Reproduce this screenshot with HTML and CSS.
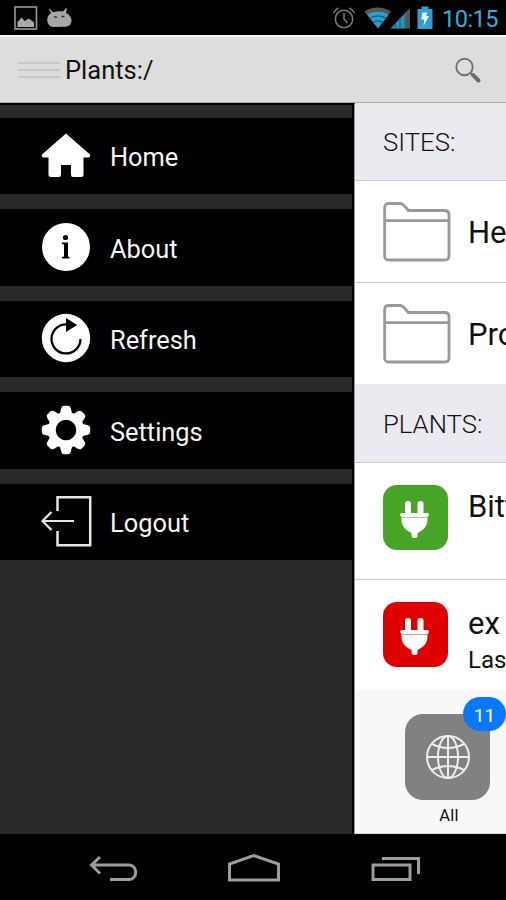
FILE: index.html
```html
<!DOCTYPE html>
<html lang="en">
<head>
<meta charset="utf-8">
<title>Plants</title>
<link rel="stylesheet" href="styles.css">
</head>
<body>
<div class="screen">
  <div class="status">
    <svg class="status-left" width="80" height="36" viewBox="0 0 80 36">
      <rect x="15" y="7" width="21.5" height="22" fill="#050505" stroke="#999" stroke-width="1.6"/>
      <path d="M17.500 27v-5l2-2 2-2.500 3 3.500 2-1 2-1.500 3 2 2.500 2v4.500z" fill="#aaa"/>
      <path d="M47.200 19c.5-3 2-5 4-6l-2.500-4 1-.4 3.200 3.700c3-1 6-1.200 10-.8L66 8l1 .5-1.200 4.300c3 1.500 5.200 3.800 5.700 6.700.4 4-2 7-6 7.300l-12 .2c-4-.5-6.500-3.500-6.300-8z" fill="#a6a6a6"/>
      <path d="M54 17h3M61.500 16.500h3" stroke="#333" stroke-width="1.400"/>
    </svg>
    <div class="status-right">
      <svg width="112" height="36" viewBox="330 0 112 36">
        <g fill="none" stroke="#777" stroke-width="1.600"><circle cx="344" cy="19" r="8.700"/><path d="M344 13v6l3.500 4M333.500 13c1-2 2.500-4 5-5M354.500 13c-1-2-2.500-4-5-5"/></g>
        <path d="M364.500 11.500c7-5.300 19-5.300 26.500 0l-2.200 3c-6-4.500-16-4.500-22 0z" fill="#5c5652"/>
        <path d="M366.800 14.500c6-4.500 16-4.500 22 0L378 28.500z" fill="#2f9dcc"/>
        <path d="M369.500 18.500c5-3.500 12-3.500 17 0M373 22.500c3-2 7-2 10 0" fill="none" stroke="#155c7c" stroke-width="1.200"/>
        <path d="M390.500 28.500L406 12v16.500z" fill="#2d91ba"/><path d="M406 12l4-4v20.500h-4z" fill="#5b524e"/>
        <path d="M395.500 23v6M400 18v11M405 13v16" stroke="#17617f"/>
        <path d="M417.500 9h4V6.500h7V9h4v20h-15z" fill="#2e9fce"/>
        <path d="M422.500 12.500h4.500l-.8 3.700 2.800-.2-5.500 10 .8-6.500h-3z" fill="#eefaff"/>
      </svg>
      <span class="clock">10:15</span>
    </div>
  </div>

  <header class="bar">
    <div class="burger"><i></i><i></i><i></i></div>
    <h1 class="title">Plants:/</h1>
    <svg class="search" width="30" height="30" viewBox="452 54 30 30">
      <circle cx="464.500" cy="66" r="8.200" fill="none" stroke="#737373" stroke-width="1.900"/>
      <path d="M470.300 71.800l3 3" stroke="#737373" stroke-width="2"/><path d="M473 74l5.500 5.500" stroke="#6c6c6c" stroke-width="4" stroke-linecap="round"/>
    </svg>
  </header>

  <main class="body">
    <nav class="drawer">
      <a class="item"><svg class="icon" viewBox="0 0 52 52"><path d="M26 3.500L50 24.500q1 3-2 3h-4.500v17q0 2.500-2.500 2.500h-8q-2 0-2-2.500V35H21v9.500q0 2.500-2 2.500h-8q-2.500 0-2.500-2.500v-17H4q-3 0-2-3z" fill="#fff"/></svg><span>Home</span></a>
      <a class="item"><svg class="icon up" viewBox="0 0 52 52"><circle cx="26" cy="26" r="24" fill="#fff"/><circle cx="25.500" cy="16.500" r="2.600"/><path d="M22 21.500h6v14l1.500.5v1.500H22V36l2-.5V23.500l-2-.5z"/></svg><span>About</span></a>
      <a class="item"><svg class="icon up" viewBox="0 0 52 52"><circle cx="26" cy="26" r="24.200" fill="#fff"/><path d="M40.500 27A14.500 14.500 0 1 1 27 12.500" fill="none" stroke="#000" stroke-width="2.300"/><path d="M26 6l11 7-11 7z"/></svg><span>Refresh</span></a>
      <a class="item"><svg class="icon" viewBox="0 0 52 52">
        <g fill="#fff"><path fill-rule="evenodd" d="M26 8a18 18 0 1 0 0 36 18 18 0 0 0 0-36zm0 7.700a10.300 10.300 0 1 1 0 20.600 10.300 10.300 0 0 1 0-20.600z"/>
        <path id="tooth" d="M19.500 11l1.800-7q.6-2.200 2.700-2.200h4q2.100 0 2.700 2.200l1.800 7z"/>
        <use href="#tooth" transform="rotate(45 26 26)"/><use href="#tooth" transform="rotate(90 26 26)"/><use href="#tooth" transform="rotate(135 26 26)"/><use href="#tooth" transform="rotate(180 26 26)"/><use href="#tooth" transform="rotate(225 26 26)"/><use href="#tooth" transform="rotate(270 26 26)"/><use href="#tooth" transform="rotate(315 26 26)"/></g></svg><span>Settings</span></a>
      <a class="item"><svg class="icon up" viewBox="0 0 52 52"><path d="M17.500 16V2.300h32.700v48H17.500V36" fill="none" stroke="#e8e4e4" stroke-width="2.500"/><path d="M34 26H3M11.500 17L2.500 26l9 9" fill="none" stroke="#e8e4e4" stroke-width="2.200"/></svg><span>Logout</span></a>
    </nav>

    <section class="content">
      <h2 class="group">SITES:</h2>
      <div class="site"><svg class="folder" viewBox="0 0 68 60"><path d="M1.700 5.500q0-4 4-4H17q2 0 3.500 1.500l5 5.500H61q5 0 5 4V54q0 4-4 4H5.700q-4 0-4-4zM2 18.700h64" fill="none" stroke="#979a9a" stroke-width="2.800"/></svg><span>He</span></div>
      <div class="site last"><svg class="folder" viewBox="0 0 68 60"><path d="M1.700 5.500q0-4 4-4H17q2 0 3.500 1.500l5 5.500H61q5 0 5 4V54q0 4-4 4H5.700q-4 0-4-4zM2 18.700h64" fill="none" stroke="#979a9a" stroke-width="2.800"/></svg><span>Pro</span></div>
      <h2 class="group plants">PLANTS:</h2>
      <div class="plant">
        <div class="tile green"><svg viewBox="0 0 65 65"><path id="plug" d="M22 28V18.500q0-2.500 3-2.500t3 2.500V28h6.500v-9.500q0-2.500 3-2.500t3 2.500V28H44q2 0 2 1.800T44.500 31.500v3c0 7-4.500 11-10 13.500V51q0 2-3 2t-3-2.500V48c-5.500-2.500-10-6.500-10-13.500v-3q-1.500 0-1.500-1.700t2-1.800z" fill="#fff"/><path class="seam" d="M18 32.500h27"/></svg></div>
        <div class="words"><span class="name">Bitt</span></div>
      </div>
      <div class="plant second">
        <div class="tile red"><svg viewBox="0 0 65 65"><use href="#plug"/><path class="seam" d="M18 32.500h27"/></svg></div>
        <div class="words"><span class="name">ex</span><span class="detail">Last</span></div>
      </div>
      <div class="tabs">
        <div class="globe"><svg viewBox="0 0 46 46"><g fill="none" stroke="#eee" stroke-width="2"><circle cx="23" cy="23" r="21"/><ellipse cx="23" cy="23" rx="10" ry="21"/><path d="M23 2v42M2 23h42M7 10q16 8 32 0M7 36q16-8 32 0"/></g></svg><span class="badge">11</span></div>
        <span class="tab-label">All</span>
      </div>
    </section>
  </main>

  <footer class="keys">
    <svg width="506" height="66" viewBox="0 834 506 66"><g fill="none" stroke="#a09c9c" stroke-width="3">
      <path d="M92 865h37.500a6 7 0 0 1 0 14.500H110M100 857l-8.500 8 8.500 8.500"/>
      <path d="M229.500 880v-16l24-8.500 25 8.500v16z"/>
      <rect x="373" y="865" width="37" height="14.500"/><path d="M382 858.500h36.500V874"/>
    </g></svg>
  </footer>
</div>
</body>
</html>
```

FILE: styles.css
```css
* { box-sizing: border-box; }
body { margin: 0; background: #000; font-family: Roboto, "Liberation Sans", sans-serif; color: #111; }
svg { display: block; flex: none; }
.screen { width: 506px; height: 900px; display: flex; flex-direction: column; overflow: hidden; }

.status { height: 35px; flex: none; display: flex; justify-content: space-between; background: #000; overflow: hidden; }
.status-right { display: flex; align-items: center; padding-right: 8px; }
.clock { width: 56px; font-size: 23.5px; line-height: 38px; height: 36px; color: #33addc; letter-spacing: -.5px; white-space: nowrap; }

.bar { height: 68px; flex: none; display: flex; align-items: center; padding: 1px 24px 0 18px; background: #ddd; border-top: 2px solid #f2f2f2; border-bottom: 1px solid #aaa; }
.burger { width: 42px; display: flex; flex-direction: column; gap: 5px; }
.burger i { height: 2px; background: #c8c8ca; }
.title { margin: 0 0 0 5px; flex: 1; font-size: 25.5px; font-weight: 400; line-height: 30px; }

.body { height: 731px; flex: none; display: flex; }
.drawer { width: 355px; background: #27292b; border-top: 2px solid #000; border-right: 1px solid #999; box-shadow: inset -2px 0 #000; padding-top: 13px; display: flex; flex-direction: column; gap: 15px; }
.item { height: 76.4px; flex: none; display: flex; align-items: center; gap: 18px; padding-left: 40px; background: #000; color: #f6f6f6; font-size: 25.4px; line-height: 30px; }
.item span { padding-top: 2.4px; }
.icon { width: 52px; height: 52px; }
.icon.up { margin-bottom: 1px; }

.content { width: 151px; display: flex; flex-direction: column; background: #fff; overflow: hidden; }
.group { margin: 0; height: 78px; flex: none; padding-left: 28px; background: #ebeaf1; border-bottom: 1px solid #ccc; font-size: 25.7px; line-height: 79px; font-weight: 300; color: #111; white-space: nowrap; }
.site { height: 102px; flex: none; display: flex; align-items: center; gap: 17px; padding-left: 28px; border-bottom: 1px solid #ccc; font-size: 31px; white-space: nowrap; }
.site.last { height: 101px; border-bottom: 0; }
.site span { padding-top: 1px; }
.folder { width: 68px; height: 60px; }
.plants { height: 79px; line-height: 81px; }
.plant { height: 117px; flex: none; display: flex; gap: 20px; padding: 22px 0 0 28px; border-bottom: 1px solid #ccc; }
.second { height: 110px; border-bottom: 0; }
.tile { width: 65px; height: 65px; flex: none; border-radius: 14px; }
.green { background: #47a426; }
.red { background: #dd0201; }
.seam { fill: none; stroke-width: 1; }
.green .seam { stroke: #9ed08c; }
.red .seam { stroke: #f09090; }
.words { display: flex; flex-direction: column; white-space: nowrap; }
.name { font-size: 31px; line-height: 44px; }
.detail { font-size: 24px; line-height: 28px; }
.tabs { height: 144px; flex: none; display: flex; flex-direction: column; background: #f8f8f8; border-bottom: 1px solid #ddd; padding: 24px 0 0 50px; }
.globe { position: relative; width: 85px; height: 86px; border-radius: 18px; background: #808282; display: flex; align-items: center; justify-content: center; }
.globe svg { width: 46px; height: 46px; }
.badge { position: absolute; left: 58px; top: -17px; width: 43px; height: 34px; border-radius: 17px; background: #0879fc; color: #fff; font-size: 19px; line-height: 37px; text-align: center; }
.tab-label { width: 88px; text-align: center; font-size: 16.5px; line-height: 31px; letter-spacing: .2px; }

.keys { height: 66px; flex: none; background: #000; }
```
